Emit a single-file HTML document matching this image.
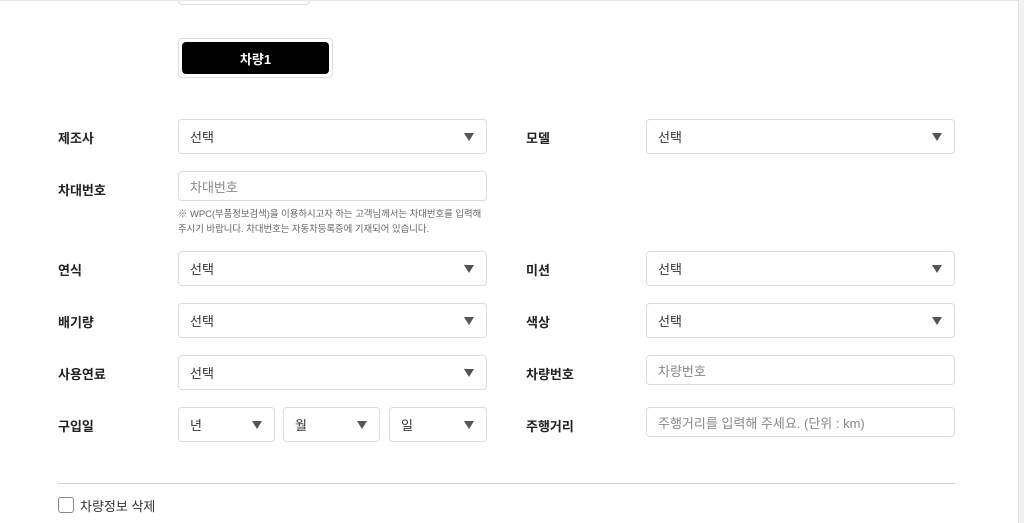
<!DOCTYPE html>
<html><head><meta charset="utf-8"><style>
*{box-sizing:border-box;margin:0;padding:0}
body{width:1024px;height:523px;background:#fff;position:relative;overflow:hidden;font-family:"Liberation Sans","Noto Sans CJK KR",sans-serif;color:#222}
.a{position:absolute}
.lbl{position:absolute;font-size:13px;font-weight:bold;color:#222}
.box{position:absolute;border:1px solid #ddd;border-radius:4px;background:#fff;font-size:13px;color:#333;padding-left:11px;display:flex;align-items:center}
.ph{color:#888}
.arr{position:absolute;right:12px;top:50%;margin-top:-4px;width:0;height:0;border-left:5px solid transparent;border-right:5px solid transparent;border-top:8px solid #555}
.help{position:absolute;left:178px;font-size:9.4px;color:#666}
</style></head><body>
<div class="a" style="left:0;top:0;width:1019px;height:1px;background:#e6e6e6"></div>
<div class="a" style="left:1018px;top:0;width:6px;height:523px;background:#f1f1f1;border-left:1px solid #e2e2e2"></div>
<div class="a" style="left:178px;top:-10px;width:132px;height:15px;border:1px solid #ddd;border-radius:4px"></div>
<div class="a" style="left:178px;top:38px;width:155px;height:40px;border:1px solid #ddd;border-radius:4px"></div>
<div class="a" style="left:182px;top:42px;width:147px;height:32px;background:#000;border-radius:4px;color:#fff;font-size:13px;font-weight:bold;display:flex;align-items:center;justify-content:center">차량1</div>

<div class="lbl" style="left:58px;top:128px">제조사</div>
<div class="box" style="left:178px;top:119px;width:309px;height:35px">선택<span class="arr"></span></div>
<div class="lbl" style="left:526px;top:128px">모델</div>
<div class="box" style="left:646px;top:119px;width:309px;height:35px">선택<span class="arr"></span></div>

<div class="lbl" style="left:58px;top:180px">차대번호</div>
<div class="box ph" style="left:178px;top:171px;width:309px;height:30px">차대번호</div>
<div class="help" style="top:206px">※ WPC(부품정보검색)을 이용하시고자 하는 고객님께서는 차대번호를 입력해</div>
<div class="help" style="top:221px">주시기 바랍니다. 차대번호는 자동차등록증에 기재되어 있습니다.</div>

<div class="lbl" style="left:58px;top:260px">연식</div>
<div class="box" style="left:178px;top:251px;width:309px;height:35px">선택<span class="arr"></span></div>
<div class="lbl" style="left:526px;top:260px">미션</div>
<div class="box" style="left:646px;top:251px;width:309px;height:35px">선택<span class="arr"></span></div>

<div class="lbl" style="left:58px;top:312px">배기량</div>
<div class="box" style="left:178px;top:303px;width:309px;height:35px">선택<span class="arr"></span></div>
<div class="lbl" style="left:526px;top:312px">색상</div>
<div class="box" style="left:646px;top:303px;width:309px;height:35px">선택<span class="arr"></span></div>

<div class="lbl" style="left:58px;top:364px">사용연료</div>
<div class="box" style="left:178px;top:355px;width:309px;height:35px">선택<span class="arr"></span></div>
<div class="lbl" style="left:526px;top:364px">차량번호</div>
<div class="box ph" style="left:646px;top:355px;width:309px;height:30px">차량번호</div>

<div class="lbl" style="left:58px;top:416px">구입일</div>
<div class="box" style="left:178px;top:407px;width:97px;height:35px">년<span class="arr"></span></div>
<div class="box" style="left:283px;top:407px;width:97px;height:35px">월<span class="arr"></span></div>
<div class="box" style="left:389px;top:407px;width:98px;height:35px">일<span class="arr"></span></div>
<div class="lbl" style="left:526px;top:416px">주행거리</div>
<div class="box ph" style="left:646px;top:407px;width:309px;height:30px">주행거리를 입력해 주세요. (단위 : km)</div>

<div class="a" style="left:58px;top:483px;width:897px;height:1px;background:#ccc"></div>
<div class="a" style="left:58px;top:497px;width:16px;height:16px;border:1px solid #888;border-radius:3px"></div>
<div class="a" style="left:80px;top:496px;font-size:13px;color:#333">차량정보 삭제</div>
</body></html>
